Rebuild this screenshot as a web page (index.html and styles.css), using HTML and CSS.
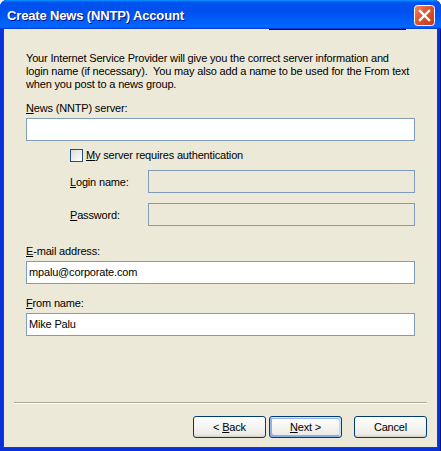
FILE: index.html
```html
<!DOCTYPE html>
<html>
<head>
<meta charset="utf-8">
<link rel="stylesheet" href="styles.css">
</head>
<body>
<div class="window">
  <div class="titlebar">
    <span class="title">Create News (NNTP) Account</span>
    <span class="close">
      <svg width="21" height="21" viewBox="0 0 21 21">
        <defs>
          <linearGradient id="cg" x1="0" y1="0" x2="1" y2="1">
            <stop offset="0" stop-color="#F08A6C"/>
            <stop offset="0.45" stop-color="#E0532F"/>
            <stop offset="1" stop-color="#C4391B"/>
          </linearGradient>
        </defs>
        <rect x="0.5" y="0.5" width="20" height="20" rx="3" fill="url(#cg)" stroke="#fff"/>
        <path d="M6 6 L15 15 M15 6 L6 15" stroke="#fff" stroke-width="2.4" stroke-linecap="square"/>
      </svg>
    </span>
  </div>
  <div class="client">
    <div class="edge-line"></div>
    <div class="content">
      <p class="intro">Your Internet Service Provider will give you the correct server information and<br>login name (if necessary).&nbsp; You may also add a name to be used for the From text<br>when you post to a news group.</p>
      <div class="field first">
        <div class="label"><u>N</u>ews (NNTP) server:</div>
        <div class="input"></div>
      </div>
      <div class="auth">
        <div class="check"><span class="box"></span><span class="check-text"><u>M</u>y server requires authentication</span></div>
        <div class="row login"><div class="row-label"><u>L</u>ogin name:</div><div class="input disabled"></div></div>
        <div class="row pass"><div class="row-label"><u>P</u>assword:</div><div class="input disabled"></div></div>
      </div>
      <div class="field email">
        <div class="label"><u>E</u>-mail address:</div>
        <div class="input">mpalu@corporate.com</div>
      </div>
      <div class="field from">
        <div class="label"><u>F</u>rom name:</div>
        <div class="input">Mike Palu</div>
      </div>
    </div>
    <div class="footer">
      <div class="sep"></div>
      <div class="buttons">
        <div class="btn"><span>&lt; <u>B</u>ack</span></div>
        <div class="btn default"><span><u>N</u>ext &gt;</span></div>
        <div class="btn cancel"><span>Cancel</span></div>
      </div>
    </div>
  </div>
</div>
</body>
</html>
```

FILE: styles.css
```css
* { box-sizing: border-box; }
html, body { margin: 0; padding: 0; background: #ffffff; }
body {
  font-family: "Liberation Sans", Arial, sans-serif;
  font-size: 11px;
  letter-spacing: -0.17px;
  color: #000;
}

.window {
  width: 441px;
  height: 451px;
  display: flex;
  flex-direction: column;
  background: #0831d9;
  border-radius: 7px 7px 0 0;
  overflow: hidden;
  box-shadow: inset 1px 0 #0831d9, inset -1px 0 #00138c;
}

.titlebar {
  height: 29px;
  flex: none;
  display: flex;
  align-items: center;
  justify-content: space-between;
  padding: 0 6px 0 7px;
  background: linear-gradient(180deg, #0997ff, #0053ee 8%, #0050ee 40%, #0066ff 88%, #0066ff 93%, #005bff 95%, #003dd7 96%, #003dd7);
}
.title {
  color: #fff;
  font-weight: bold;
  font-size: 13px;
  letter-spacing: -0.15px;
  text-shadow: 1px 1px #0f1089;
  padding-top: 1px;
}
.close { display: flex; width: 21px; height: 21px; margin-top: 2px; }

.client {
  flex: 1;
  display: flex;
  flex-direction: column;
  background: #ECE9D8;
  margin: 0 4px 4px 4px;
  position: relative;
  box-shadow: 0 0 0 1px #0a3fd6;
}
.edge-line {
  position: absolute;
  left: 265px;
  top: 0;
  width: 137px;
  height: 1px;
  background: #111;
}

.content { padding: 23px 22px 0 22px; }
.intro { margin: 0; line-height: 13px; white-space: nowrap; }

.label { line-height: 13px; margin-bottom: 3px; }
.field.first { margin-top: 11px; }
.field.email { margin-top: 19px; }
.field.from { margin-top: 13px; }

.input {
  height: 23px;
  border: 1px solid #7F9DB9;
  background: #fff;
  padding: 0 2px;
  line-height: 21px;
}
.input.disabled { background: #ECE9D8; flex: 1; }

.auth { padding-left: 44px; margin-top: 8px; }
.check { display: flex; align-items: center; height: 13px; line-height: 13px; }
.box {
  width: 13px; height: 13px;
  border: 1px solid #1C5180;
  background: linear-gradient(135deg, #DCDCD7, #fff);
  margin-right: 3px;
}
.row { display: flex; align-items: center; }
.row.login { margin-top: 8px; }
.row.pass { margin-top: 10px; }
.row-label { width: 78px; }

.footer { margin-top: auto; padding: 0 10px 9px 10px; }
.sep { height: 2px; border-top: 1px solid #ACA899; border-bottom: 1px solid #fff; }
.buttons { display: flex; justify-content: flex-end; margin-top: 12px; }
.btn {
  width: 73px;
  height: 22px;
  border: 1px solid #003c74;
  border-radius: 3px;
  background: linear-gradient(180deg, #fff, #ecebe6 86%, #d6d0c5);
  display: flex;
  align-items: center;
  justify-content: center;
  line-height: 13px;
}
.btn.default {
  margin-left: 3px;
  box-shadow: inset -1px 1px #cee7ff, inset 1px 2px #98b8ea, inset -2px 2px #bcd4f6, inset 1px -1px #89ade4, inset 2px -2px #89ade4;
}
.btn.cancel { margin-left: 12px; }
```
